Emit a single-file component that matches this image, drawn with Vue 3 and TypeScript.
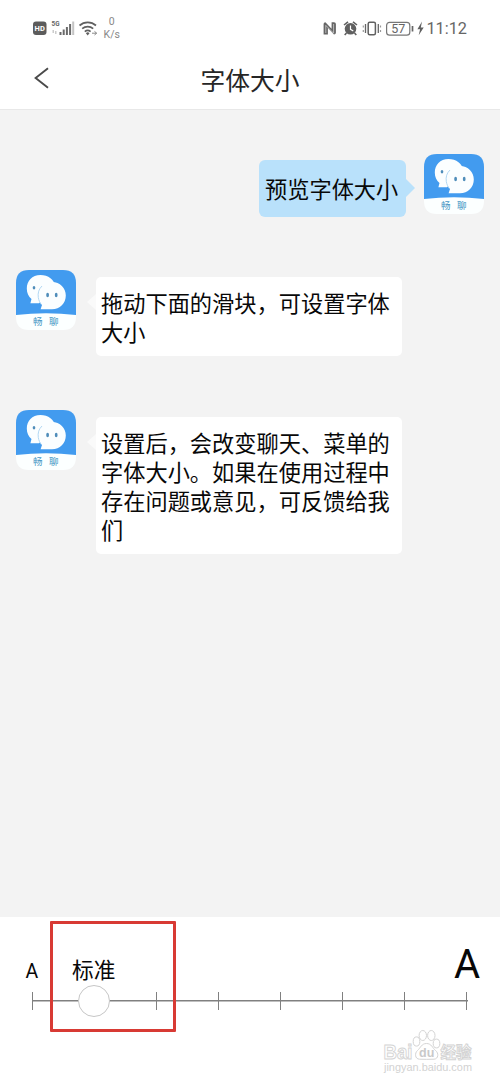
<script setup lang="ts">
interface Message {
  id: number
  mine: boolean
  text: string
}

const messages: Message[] = [
  { id: 1, mine: true, text: '预览字体大小' },
  { id: 2, mine: false, text: '拖动下面的滑块，可设置字体大小' },
  { id: 3, mine: false, text: '设置后，会改变聊天、菜单的字体大小。如果在使用过程中存在问题或意见，可反馈给我们' },
]

const steps = 8
</script>

<template>
  <div class="screen">
    <div class="status">
      <svg class="status-left" width="68" height="24" viewBox="0 0 68 24">
        <rect x="1" y="5.5" width="13.5" height="13.5" rx="3" fill="#5c5c5c" />
        <text x="7.7" y="15.2" class="hd" text-anchor="middle">HD</text>
        <text x="19.5" y="10.3" class="g5" textLength="8" lengthAdjust="spacingAndGlyphs">5G</text>
        <g fill="#ccc"><rect x="20.5" y="14" width="1.5" height="3" /><rect x="23" y="15" width="1.5" height="3" /></g>
        <g fill="#6a6a6a">
          <rect x="27.5" y="16" width="2" height="3" />
          <rect x="30.7" y="13.5" width="2" height="5.5" />
          <rect x="33.9" y="11" width="2" height="8" />
          <rect x="37.1" y="8" width="2" height="11" />
        </g>
        <rect x="40.2" y="5.5" width="2" height="13.5" fill="#c4c4c4" />
        <g fill="none" stroke="#606060" stroke-width="1.7">
          <path d="M47.5 9.5a12.4 12.4 0 0 1 16.5 0" />
          <path d="M50.2 12.6a8.4 8.4 0 0 1 11 0" />
          <path d="M52.8 15.6a4.5 4.5 0 0 1 5.8 0" />
        </g>
        <path d="M53.9 17.3a2.5 2.5 0 0 1 3.6 0l-1.8 2.2z" fill="#606060" />
        <path d="M60 17.2h4.5M62.5 15.4l2.2 1.8l-2.2 1.8" fill="none" stroke="#888" stroke-width="1" />
      </svg>
      <div class="rate"><span>0</span><span>K/s</span></div>
      <svg class="status-right" width="104" height="24" viewBox="0 0 104 24">
        <path d="M2.6 18.6V8Q2.6 6.2 4.4 6.2L10.6 12.8V6.2H13Q14.9 6.2 14.9 8V16.8Q14.9 18.6 13 18.6L6.9 12V18.6Z" fill="#666" />
        <path d="M4.8 17V9.4L12.6 17.2V8" fill="none" stroke="#ddd" stroke-width="0.7" />
        <circle cx="29.5" cy="12.8" r="5.8" fill="#606060" />
        <path d="M23 9l4-3.2M36 9l-4-3.2M25.5 17l-1.8 2M33.5 17l1.8 2" stroke="#606060" stroke-width="1.6" />
        <path d="M29.5 9.5v3.8l2.8 1.6" fill="none" stroke="#fff" stroke-width="1.2" />
        <rect x="47.2" y="6.2" width="7.2" height="12.6" rx="1.5" fill="none" stroke="#606060" stroke-width="1.5" />
        <path d="M44.5 8v9M57.3 8v9" stroke="#666" stroke-width="1.3" />
        <path d="M42.3 9.5v2M42.3 14v2M59.5 9.5v2M59.5 14v2" stroke="#999" stroke-width="1.2" />
        <rect x="65.6" y="6.4" width="23.2" height="12.8" rx="3" fill="none" stroke="#777" stroke-width="1.2" />
        <path d="M91.5 10v5.5" stroke="#666" stroke-width="1.7" />
        <text x="77.2" y="17.2" class="battery" text-anchor="middle">57</text>
        <path d="M101 5.5l-4.6 7.7h2.7l-1.4 6 5-7.6h-2.9z" fill="#606060" />
      </svg>
      <span class="clock">11:12</span>
    </div>

    <header class="header">
      <svg class="back" width="16" height="22" viewBox="0 0 16 22">
        <path d="M14 1.2L1.6 11L14 20.8" fill="none" stroke="#4a4a4a" stroke-width="1.9" />
      </svg>
      <h1>字体大小</h1>
    </header>

    <main class="chat">
      <div v-for="m in messages" :key="m.id" class="row" :class="{ mine: m.mine }">
        <svg class="avatar" width="60" height="60" viewBox="0 0 60 60">
          <path d="M0 45V13Q0 0 13 0H47Q60 0 60 13V45Z" fill="#429bef" />
          <path d="M0 45Q30 41.5 60 45V47Q60 60 47 60H13Q0 60 0 47Z" fill="#fcffff" />
          <path d="M24.5 5C16 5 10.8 11 10.8 18.5C10.8 23 12.5 26.5 15.5 29L14.4 33.2L23 33.2L40 18C38.5 9 32 5 24.5 5Z" fill="#fbfeff" />
          <path d="M36 12C27.5 12 22.3 18 22.3 25C22.3 29.3 23.6 32.4 26 35L24.6 39.3L36 39.3C44 39.3 49.8 33.5 49.8 25.6C49.8 18 44 12 36 12Z" fill="#fbfeff" />
          <path d="M26 16C22.8 19 21.6 23 22.3 27.5C22.8 30.5 24 33 25.4 34.6" fill="none" stroke="#a9d3f0" stroke-width="0.9" />
          <ellipse cx="18" cy="17.8" rx="1.3" ry="1.8" fill="#4f8dba" />
          <ellipse cx="31.6" cy="25" rx="1.4" ry="2.3" fill="#4f8dba" />
          <ellipse cx="40.2" cy="25" rx="1.4" ry="2.3" fill="#4f8dba" />
          <text x="17" y="54.5" class="brand">畅</text>
          <text x="33" y="54.5" class="brand">聊</text>
        </svg>
        <div class="bubble">{{ m.text }}</div>
      </div>
    </main>

    <footer class="panel">
      <div class="labels">
        <span class="small">A</span>
        <span class="standard">标准</span>
        <span class="large">A</span>
      </div>
      <div class="track">
        <i v-for="n in steps" :key="n" class="tick"></i>
        <div class="thumb"></div>
      </div>
      <div class="highlight"></div>
      <svg class="watermark" width="96" height="50" viewBox="0 0 96 50">
        <g fill="#fff" stroke="#d4d4d4" stroke-width="1">
          <ellipse cx="36.5" cy="15.5" rx="3.3" ry="4.6" />
          <ellipse cx="42.8" cy="9.5" rx="3.7" ry="5" />
          <ellipse cx="51.3" cy="9.5" rx="3.7" ry="5" />
          <ellipse cx="56.5" cy="17.5" rx="3.3" ry="4.4" />
          <path d="M46.5 17.5C41.5 17.5 40.5 22 37.5 24.5C34.5 27 34.8 33 39.5 33.2C44 33.4 49 33.4 54 33.2C58.5 33 59 27 55.5 24.5C52.5 22 51.5 17.5 46.5 17.5Z" />
          <text x="3.5" y="33" class="wm-main" textLength="29" lengthAdjust="spacingAndGlyphs">Bai</text>
          <text x="60.5" y="31.5" class="wm-cn" textLength="31" lengthAdjust="spacingAndGlyphs">经验</text>
        </g>
        <text x="39" y="30.5" class="wm-du">du</text>
        <text x="4" y="45" class="wm-url" textLength="88" lengthAdjust="spacingAndGlyphs">jingyan.baidu.com</text>
      </svg>
    </footer>
  </div>
</template>

<style>
body {
  margin: 0;
}
</style>

<style scoped>
.screen {
  width: 500px;
  height: 1084px;
  display: flex;
  flex-direction: column;
  overflow: hidden;
  background: #fff;
  color: #080808;
  font-family: Roboto, "Noto Sans CJK SC", sans-serif;
}

.status {
  height: 50px;
  box-sizing: border-box;
  padding: 16px 33px 0 32px;
  display: flex;
  flex: none;
}

.status-left {
  flex: none;
}

.hd {
  font: 700 7.5px Roboto, sans-serif;
  fill: #fff;
}

.g5 {
  font: 700 8px Roboto, sans-serif;
  fill: #666;
}

.rate {
  width: 24px;
  margin-left: 2px;
  display: flex;
  flex-direction: column;
  align-items: center;
  font-size: 10.5px;
  line-height: 12.5px;
  color: #888;
}

.status-right {
  margin-left: 200px;
  flex: none;
}

.battery {
  font: 12.5px Roboto, sans-serif;
  fill: #666;
}

.clock {
  margin-left: 1px;
  font-size: 16.3px;
  line-height: 26px;
  color: #666;
  white-space: nowrap;
}

.header {
  height: 60px;
  flex: none;
  box-sizing: border-box;
  border-bottom: 1px solid #e8e8e8;
  display: grid;
  grid-template-columns: 1fr auto 1fr;
}

.back {
  margin: 17px 0 0 34px;
}

h1 {
  margin: 0;
  padding-top: 3px;
  font-size: 24.8px;
  line-height: 58px;
  height: 56px;
  font-weight: 400;
  color: #262626;
}

.chat {
  height: 807px;
  flex: none;
  box-sizing: border-box;
  padding: 44px 16px 0;
  background: #f3f3f3;
  display: flex;
  flex-direction: column;
}

.row {
  display: flex;
  align-items: flex-start;
  gap: 20px;
  height: 140px;
}

.row.mine {
  flex-direction: row-reverse;
  gap: 18px;
  height: 116px;
}

.avatar {
  flex: none;
}

.bubble {
  position: relative;
  box-sizing: border-box;
  width: 306px;
  margin-top: 7px;
  padding: 12.5px 5px 8px;
  border-radius: 5px;
  background: #fff;
  font-size: 22.22px;
  line-height: 29.2px;
}

.bubble::before {
  content: "";
  position: absolute;
  left: -9px;
  top: 17px;
  border: solid transparent;
  border-width: 8px 9px 8px 0;
  border-right-color: #fafafa;
}

.mine .bubble {
  width: 147px;
  margin-top: 6px;
  padding: 16px 0 12px 6px;
  border-radius: 6px;
  background: #b9e1fb;
  white-space: nowrap;
}

.mine .bubble::before {
  left: auto;
  right: -9px;
  top: 19px;
  border-width: 9px 0 9px 9px;
  border-left-color: #b9e1fb;
}

.brand {
  font: 9.5px "Noto Sans CJK SC", sans-serif;
  fill: #4696c4;
}

.panel {
  position: relative;
  flex: 1;
  background: #fff;
}

.labels {
  height: 75px;
  padding: 0 20px 0 25.5px;
  display: flex;
  align-items: baseline;
}

.small {
  width: 46.5px;
  font-size: 19.5px;
}

.standard {
  font-size: 21.7px;
}

.large {
  margin-left: auto;
  font-size: 40px;
  line-height: 96px;
}

.track {
  position: relative;
  width: 436px;
  height: 18px;
  margin-left: 31.5px;
  display: flex;
  justify-content: space-between;
  background: linear-gradient(#808080, #808080) 0 8px / 100% 1.5px no-repeat;
}

.tick {
  width: 1.5px;
  height: 18px;
  background: #808080;
}

.thumb {
  position: absolute;
  left: 46.5px;
  top: -7px;
  width: 32px;
  height: 32px;
  box-sizing: border-box;
  border: 1px solid #c6c6c6;
  border-radius: 50%;
  background: #fff;
}

.highlight {
  position: absolute;
  left: 50px;
  top: 4px;
  width: 126px;
  height: 111px;
  box-sizing: border-box;
  border: 3px solid #d83a34;
  border-radius: 1px;
}

.watermark {
  position: absolute;
  left: 380px;
  top: 109px;
}

.wm-main {
  font: 700 21px "Liberation Sans", sans-serif;
}

.wm-cn {
  font: 700 16px "Noto Sans CJK SC", sans-serif;
}

.wm-du {
  font: 700 12.5px "Liberation Sans", sans-serif;
  fill: #c9c9c9;
}

.wm-url {
  font: 11px "Liberation Sans", sans-serif;
  fill: #d2d2d2;
}
</style>
